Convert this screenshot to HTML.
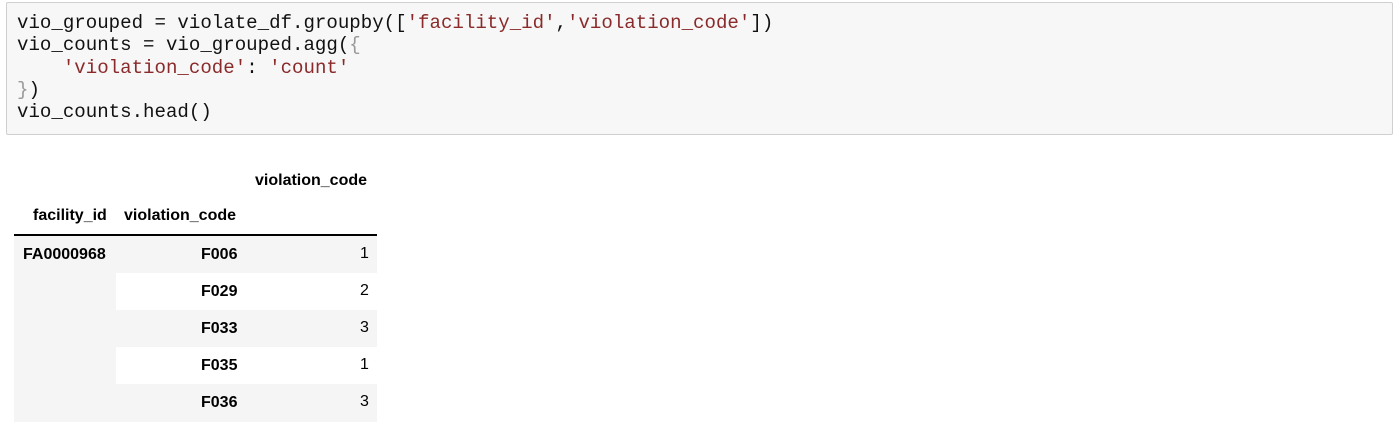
<!DOCTYPE html>
<html><head><style>
body{margin:0;width:1400px;height:428px;background:#fff;overflow:hidden;position:relative}
.code{position:absolute;left:6px;top:2px;width:1387px;height:133px;border:1px solid #cfcfcf;background:#f7f7f7;border-radius:2px;box-sizing:border-box}
pre{margin:0;position:absolute;left:10px;top:9px;font-family:"Liberation Mono",monospace;font-size:19.1px;line-height:22.3px;color:#111}
.s{color:#8a2a2a}.b{color:#999}
.t{position:absolute;font-family:"Liberation Sans",sans-serif;font-size:16px;color:#000}
.bold{font-weight:bold}
.bg{position:absolute;background:#f5f5f5}
</style></head><body>
<div class="code"><pre>vio_grouped = violate_df.groupby([<span class="s">'facility_id'</span>,<span class="s">'violation_code'</span>])
vio_counts = vio_grouped.agg(<span class="b">{</span>
    <span class="s">'violation_code'</span>: <span class="s">'count'</span>
<span class="b">}</span>)
vio_counts.head()</pre></div>
<div class="bg" style="left:14px;top:236px;width:363px;height:37px"></div>
<div class="bg" style="left:14px;top:273px;width:102px;height:149px"></div>
<div class="bg" style="left:14px;top:310px;width:363px;height:37px"></div>
<div class="bg" style="left:14px;top:384px;width:363px;height:38px"></div>
<div style="position:absolute;left:14px;top:234px;width:363px;height:2px;background:#000"></div>
<div class="t bold" style="left:255px;top:172px">violation_code</div>
<div class="t bold" style="left:33px;top:207px">facility_id</div>
<div class="t bold" style="left:124px;top:207px">violation_code</div>
<div class="t bold" style="left:23px;top:246px">FA0000968</div>
<div class="t bold" style="left:201px;top:246px">F006</div>
<div class="t bold" style="left:201px;top:283px">F029</div>
<div class="t bold" style="left:201px;top:320px">F033</div>
<div class="t bold" style="left:201px;top:357px">F035</div>
<div class="t bold" style="left:201px;top:394px">F036</div>
<div class="t" style="left:360px;top:245px">1</div>
<div class="t" style="left:360px;top:282px">2</div>
<div class="t" style="left:360px;top:319px">3</div>
<div class="t" style="left:360px;top:356px">1</div>
<div class="t" style="left:360px;top:393px">3</div>
</body></html>
